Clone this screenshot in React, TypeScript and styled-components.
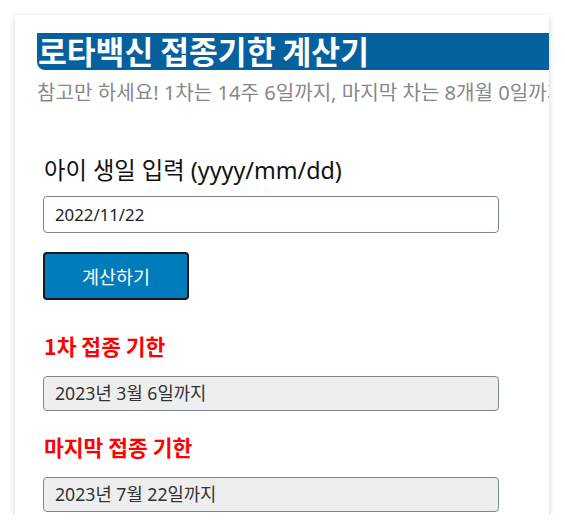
import React from 'react'
import styled, { createGlobalStyle } from 'styled-components'

const GlobalStyle = createGlobalStyle`
body {
  margin: 0;
  background: #ffffff;
  font-family: "Noto Sans", "Noto Sans CJK KR", sans-serif;
}
`

const results = [
  { title: '1차 접종 기한', value: '2023년 3월 6일까지' },
  { title: '마지막 접종 기한', value: '2023년 7월 22일까지' },
]

const App = () => {
  const [birth, setBirth] = React.useState<string>('2022/11/22')
  return (
    <>
      <GlobalStyle />
      <Card>
        <Title>로타백신 접종기한 계산기</Title>
        <Subtitle>참고만 하세요! 1차는 14주 6일까지, 마지막 차는 8개월 0일까지 접종 가능합니다.</Subtitle>
        <Form>
          <FieldLabel>아이 생일 입력 (yyyy/mm/dd)</FieldLabel>
          <DateInput value={birth} onChange={(e) => setBirth(e.target.value)} />
          <Button>계산하기</Button>
          {results.map((r) => (
            <React.Fragment key={r.title}>
              <ResultTitle>{r.title}</ResultTitle>
              <ResultBox>{r.value}</ResultBox>
            </React.Fragment>
          ))}
        </Form>
      </Card>
    </>
  )
}

export default App

const Card = styled.div`
  margin: 15px 0 0 15px;
  width: 534px;
  height: 500px;
  box-sizing: border-box;
  padding: 18px 0 0 22px;
  background: #ffffff;
  box-shadow: 0 2px 6px rgba(0, 0, 0, 0.18);
  overflow: hidden;
`

const Title = styled.h1`
  margin: 0;
  height: 37px;
  line-height: 36px;
  padding-left: 1px;
  background: #05619e;
  color: #ffffff;
  font-family: "Noto Sans CJK KR", sans-serif;
  font-size: 31.3px;
  font-weight: 700;
  border-bottom-left-radius: 8px;
  white-space: nowrap;
`

const Subtitle = styled.p`
  margin: 10px 0 0;
  line-height: 26px;
  font-size: 20.1px;
  color: #888888;
  white-space: nowrap;
  font-family: "Noto Sans", "Noto Sans CJK KR", sans-serif;
`

const Form = styled.div`
  padding-left: 6px;
  display: flex;
  flex-direction: column;
  align-items: flex-start;
`

const FieldLabel = styled.label`
  margin-top: 50px;
  margin-left: 1px;
  font-size: 23.3px;
  line-height: 28px;
  color: #111111;
`

const DateInput = styled.input`
  margin-top: 12px;
  width: 456px;
  height: 37px;
  box-sizing: border-box;
  border: 1px solid #7b8694;
  border-radius: 4px;
  padding: 0 11px;
  font-family: "Noto Sans", "Noto Sans CJK KR", sans-serif;
  font-size: 16.8px;
  color: #222222;
  outline: none;
`

const Button = styled.button`
  margin-top: 19px;
  margin-bottom: 32px;
  width: 146px;
  height: 48px;
  box-sizing: border-box;
  background: #007bbb;
  border: 2px solid #1a1a1a;
  border-radius: 4px;
  color: #ffffff;
  font-family: "Noto Sans CJK KR", sans-serif;
  font-size: 18.5px;
  cursor: pointer;
`

const ResultTitle = styled.div`
  margin-left: 1px;
  font-family: "Noto Sans CJK KR", sans-serif;
  font-size: 21.5px;
  font-weight: 700;
  line-height: 28px;
  color: #ff0000;
`

const ResultBox = styled.div`
  margin-top: 16px;
  margin-bottom: 22px;
  width: 456px;
  height: 35px;
  box-sizing: border-box;
  background: #eeeeee;
  border: 1px solid #7b8694;
  border-radius: 4px;
  padding: 0 11px;
  line-height: 33px;
  font-size: 17.7px;
  color: #333333;
  font-family: "Noto Sans", "Noto Sans CJK KR", sans-serif;
`
